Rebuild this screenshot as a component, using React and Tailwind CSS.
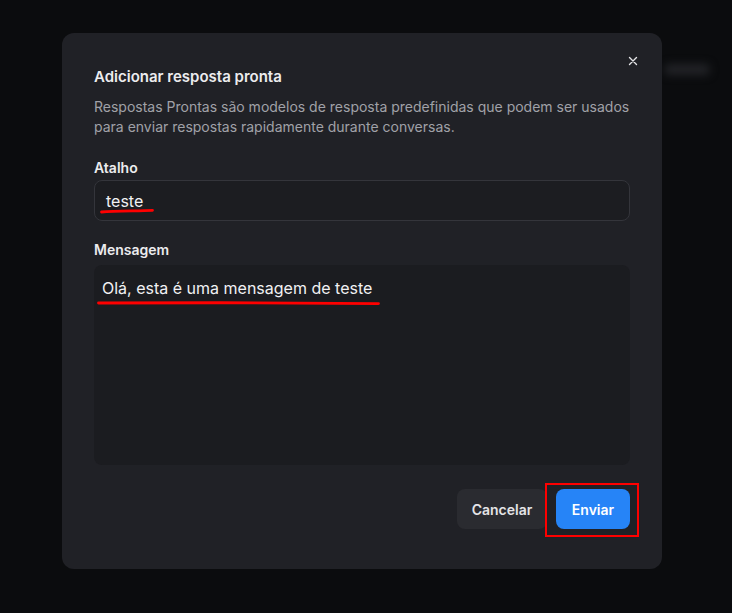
import React from "react";

export default function App() {
  return (
    <div
      className="relative w-[732px] h-[613px] overflow-hidden bg-[#0b0c0e] pl-[62px] pt-[33px]"
      style={{ fontFamily: "Inter, 'Noto Sans', sans-serif" }}
    >
      {/* faint blurred background content */}
      <div className="absolute left-[664px] top-[64px] h-[11px] w-[46px] rounded-full bg-[#222327] blur-[4px]" />

      <div className="relative flex h-[536px] w-[600px] flex-col rounded-xl bg-[#202126] px-8 pt-8">
        <button className="absolute right-[24px] top-[23px] flex h-[10px] w-[10px] items-center justify-center text-[#e4e4e7]">
          <svg width="10" height="10" viewBox="0 0 10 10" fill="none">
            <path d="M1.5 1.5L8.5 8.5M8.5 1.5L1.5 8.5" stroke="currentColor" strokeWidth="1.4" strokeLinecap="round" />
          </svg>
        </button>

        <h2 className="text-[15px] font-semibold leading-6 text-[#ececee]">Adicionar resposta pronta</h2>
        <p className="mt-2 text-[14px] leading-5 text-[#a0a1a8]">
          Respostas Prontas são modelos de resposta predefinidas que podem ser usados para enviar respostas rapidamente durante conversas.
        </p>

        <label className="mt-[21px] text-[14px] font-semibold leading-5 text-[#ececee]">Atalho</label>
        <div className="relative mt-[2px] flex h-[41px] items-center rounded-lg border border-[#34353b] bg-[#1c1d21] pl-[11px]">
          <span className="text-[16px] leading-6 text-[#f1f1f3]">teste</span>
          <svg className="absolute left-[5px] top-[27px]" width="54" height="6" viewBox="0 0 54 6" fill="none">
            <path d="M1.5 4 C 15 3.2, 35 3, 52.5 2.4" stroke="#ff0000" strokeWidth="2.8" strokeLinecap="round" />
          </svg>
        </div>

        <label className="mt-[19px] text-[14px] font-semibold leading-5 text-[#ececee]">Mensagem</label>
        <div className="relative mt-[5px] h-[200px] rounded-lg bg-[#1b1c20] px-2 pt-[11px]">
          <span className="text-[16px] leading-6 text-[#f1f1f3]">Olá, esta é uma mensagem de teste</span>
          <svg className="absolute left-[3px] top-[35px]" width="284" height="6" viewBox="0 0 284 6" fill="none">
            <path d="M1.5 3 C 90 2.6, 200 2.6, 281.5 3.6" stroke="#ff0000" strokeWidth="2.8" strokeLinecap="round" />
          </svg>
        </div>

        <div className="mt-[24px] flex justify-end gap-[9px]">
          <button className="h-10 w-[90px] rounded-lg bg-[#2a2b30] text-[14px] font-semibold text-[#e4e4e7]">Cancelar</button>
          <div className="relative">
            <button className="h-10 w-[74px] rounded-lg bg-[#2684f7] text-[14px] font-semibold text-white">Enviar</button>
            <div className="pointer-events-none absolute -left-[11px] -top-[6px] h-[54px] w-[94px] border-2 border-[#ff0000]" />
          </div>
        </div>
      </div>
    </div>
  );
}
